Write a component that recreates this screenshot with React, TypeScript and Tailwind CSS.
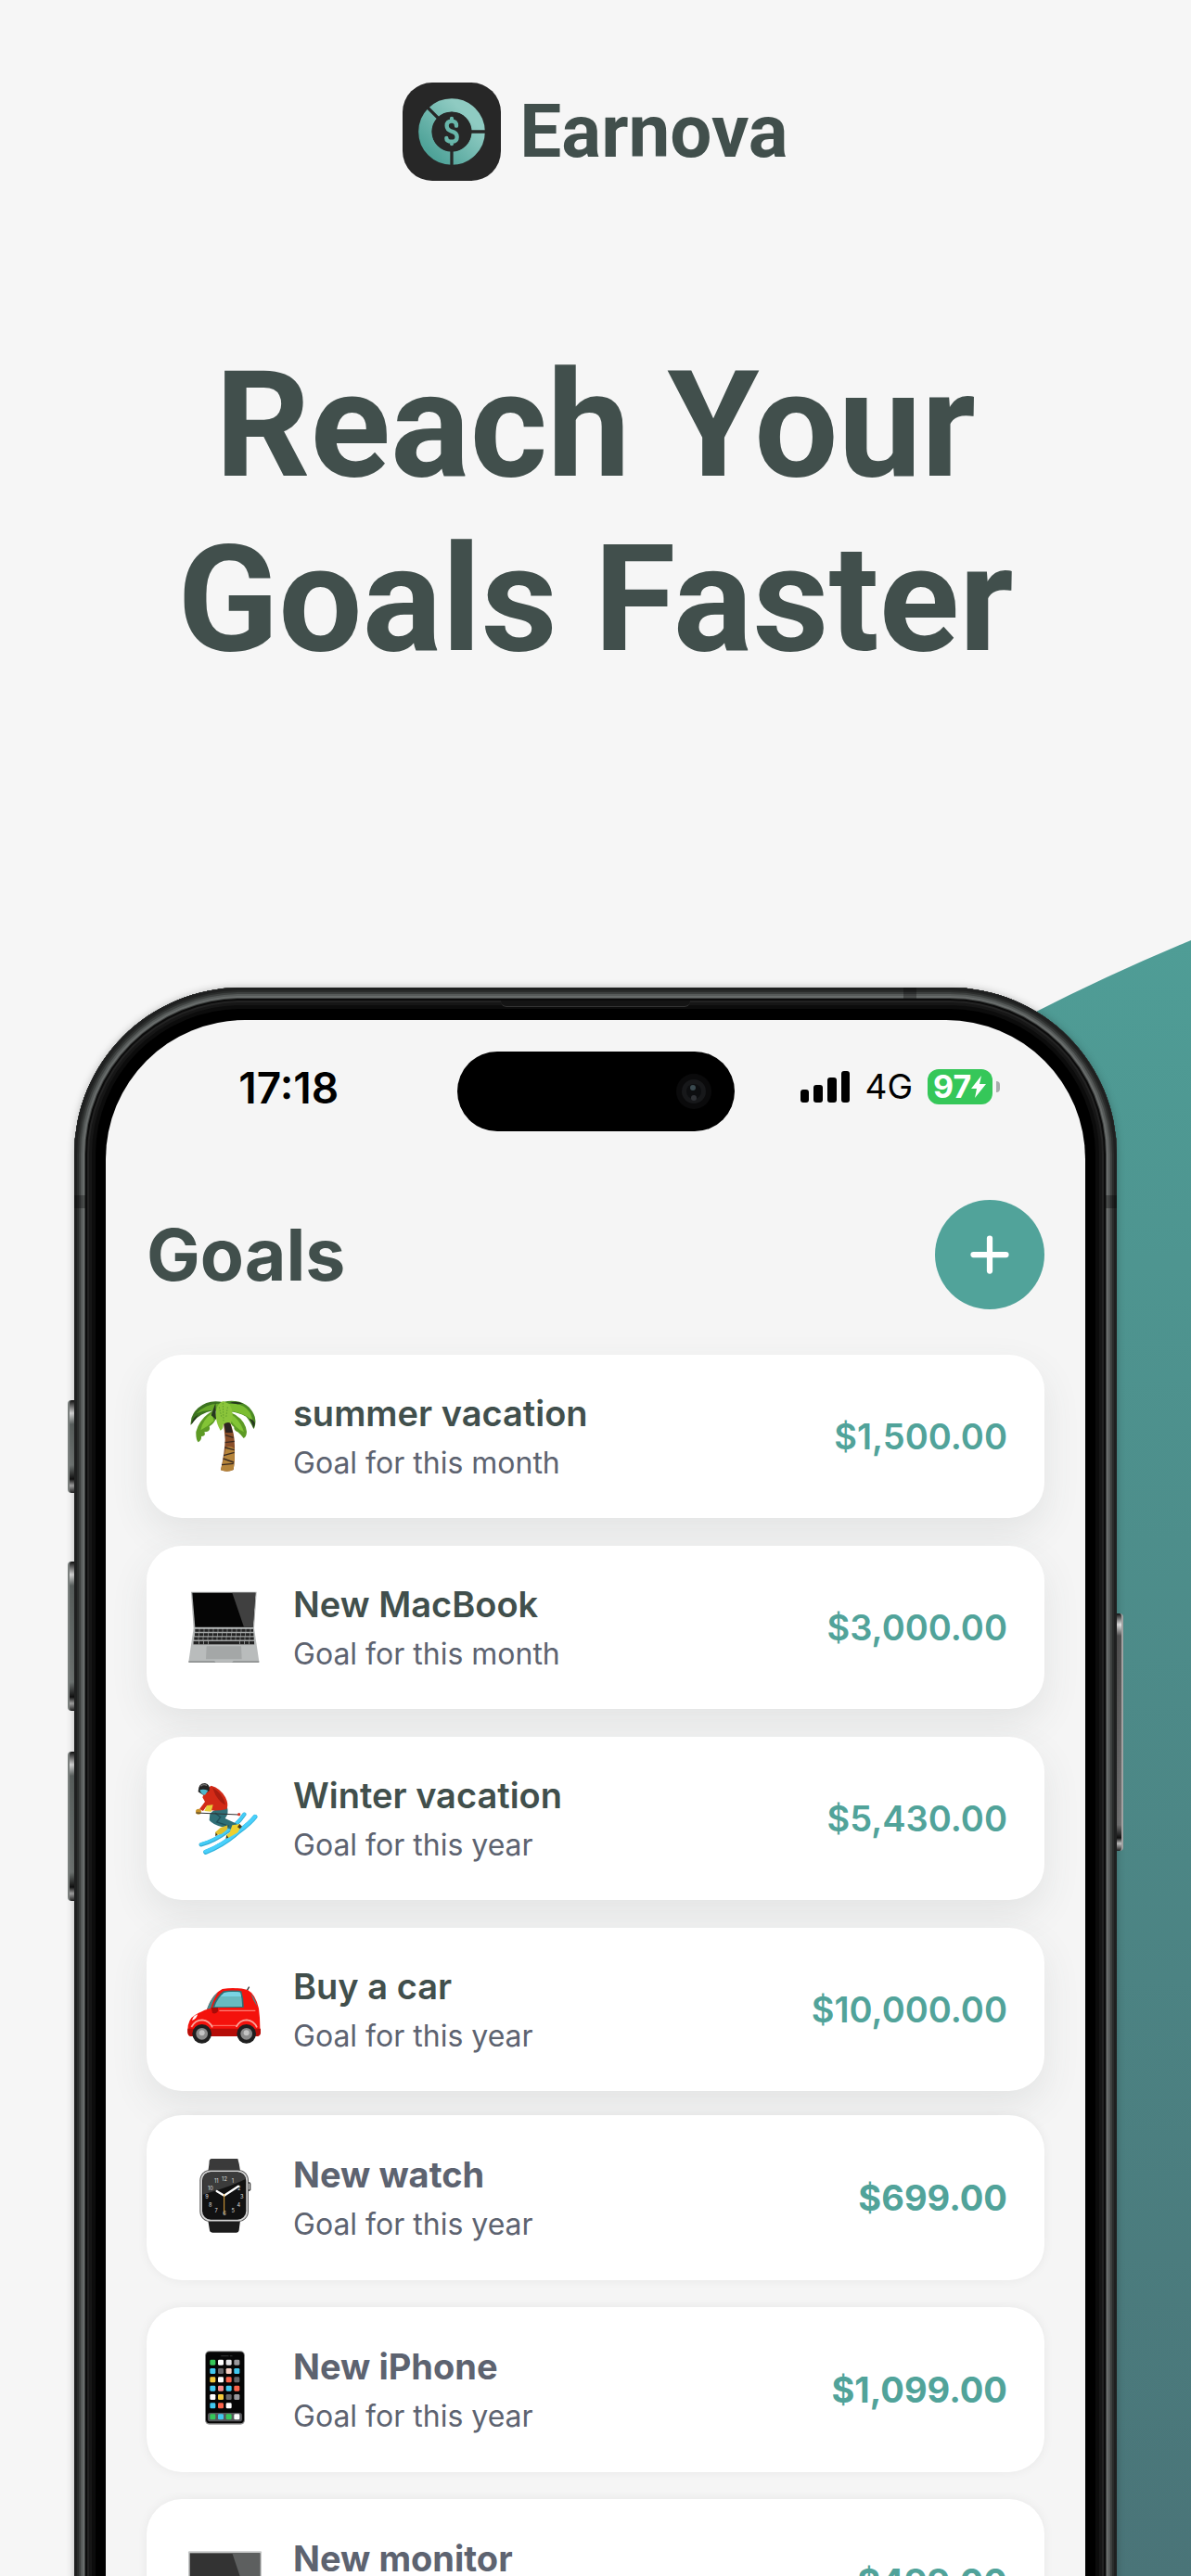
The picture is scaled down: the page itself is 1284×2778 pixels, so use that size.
import { Plus } from 'lucide-react';

const PalmIcon = () => (
    <svg viewBox="155 180 240 240" className="size-20 shrink-0" aria-hidden="true">
        <path d="M272 255 Q280 242 292 252 Q308 290 308 330 Q309 380 304 408 Q284 418 263 409 Q276 350 277 310 Z" fill="#8a4f2a" />
        <path d="M280 335 Q296 330 307 340 Q309 380 304 408 Q284 418 263 409 Q273 370 280 335Z" fill="#b5843a" />
        <path d="M273 258 Q284 246 294 258 L302 288 L279 288 Z" fill="#2d2420" />
        <path d="M278 296 L304 304 M277 320 L307 316 M276 336 L307 344 M272 362 L307 352 M271 372 L305 384 M266 392 L304 388" stroke="#3a2a20" strokeWidth="4" fill="none" />
        <path d="M240 215 Q195 240 183 285 Q182 310 190 319 Q202 312 200 300 Q216 300 210 286 Q232 284 226 268 Q244 258 250 235 Z" fill="#5d9a25" />
        <path d="M235 225 Q205 245 198 280 Q222 268 240 250 Z" fill="#83c436" />
        <path d="M300 225 Q342 245 347 285 Q346 302 337 306 Q328 294 318 286 Q304 280 306 270 Q294 262 292 245 Z" fill="#5d9a25" />
        <path d="M295 228 Q325 245 338 286 Q310 275 290 240 Z" fill="#83c436" />
        <path d="M272 190 Q225 178 190 208 Q163 232 166 264 Q188 226 240 216 Z" fill="#3d7420" />
        <path d="M265 195 Q220 190 184 226 Q215 212 250 218 Z" fill="#68a92b" />
        <path d="M272 188 Q325 178 355 206 Q378 232 375 256 Q374 272 369 276 Q358 250 345 236 Q320 222 290 220 Z" fill="#4b8a24" />
        <path d="M290 195 Q335 190 357 222 Q365 238 366 252 Q340 222 290 218 Z" fill="#7bbd32" />
        <path d="M168 262 Q170 240 190 230 L180 246 Z M369 274 Q362 250 355 242 Q370 246 374 258 Z M246 192 L248 246 L232 232 Z M292 192 Q310 184 335 194 L318 196 Z" fill="#26381f" />
        <path d="M270 186 Q245 196 247 235 Q250 262 262 281 Q272 276 271 262 Q285 250 296 258 Q308 225 292 196 Z" fill="#8bc53b" />
        <path d="M270 192 L272 250 M258 205 L266 240 M285 205 L280 240" stroke="#4f8c25" strokeWidth="2" strokeDasharray="5 4" />
    </svg>
);

const LaptopIcon = () => (
    <svg viewBox="155 795 240 240" className="size-20 shrink-0" aria-hidden="true">
        <path d="M167 800 H379 L371 917 H175 Z" fill="#a9abab" />
        <path d="M171 803 H375 L367 914 H180 Z" fill="#050505" />
        <path d="M300 803 H375 L367 914 H338 Z" fill="#404040" />
        <path d="M175 917 H371 L387 1026 H159 Z" fill="#b9bcbc" />
        <path d="M179 921 H368 L373 971 H173 Z" fill="#a2a5a5" />
        <path d="M180 925 H368 M179 938 H369 M177 951 H370" stroke="#222" strokeWidth="9" strokeDasharray="13 2" />
        <path d="M175 965 H371" stroke="#222" strokeWidth="10" />
        <path d="M191 965 h2 M206 965 h2 M222 965 h2 M323 965 h2 M338 965 h2 M354 965 h2" stroke="#b9bcbc" strokeWidth="10" />
        <path d="M217 976 H329 L331 1018 H215 Z" fill="#a4a7a7" />
        <path d="M159 1024 H242 L246 1027 H300 L304 1024 H387 V1029 H159 Z" fill="#8d9090" />
    </svg>
);

const SkierIcon = () => (
    <svg viewBox="155 180 240 240" className="size-20 shrink-0" aria-hidden="true">
        <path d="M199 385 Q238 376 285 342 Q322 314 339 287" stroke="#37a9cf" strokeWidth="13" fill="none" strokeLinecap="round" />
        <path d="M199 383 Q238 374 285 340 Q322 312 339 286" stroke="#43cdf7" strokeWidth="9" fill="none" strokeLinecap="round" />
        <path d="M228 285 Q238 268 284 264 Q290 285 277 300 L316 318 Q312 332 300 336 L268 328 Q240 322 226 306 Z" fill="#2f6f76" />
        <path d="M244 282 L262 296 L250 312 L290 325" stroke="#1f4f58" strokeWidth="4" fill="none" />
        <path d="M262 330 L285 322 L284 336 L266 350 L248 354 L245 345 Z" fill="#e0c02c" />
        <path d="M214 409 Q270 388 322 342 Q358 316 374 295" stroke="#2fb2dc" strokeWidth="15" fill="none" strokeLinecap="round" />
        <path d="M214 407 Q270 386 322 340 Q358 314 374 294" stroke="#49d0fb" strokeWidth="11" fill="none" strokeLinecap="round" />
        <path d="M300 322 L324 318 L327 330 L318 346 L286 364 L280 355 L292 346 Z" fill="#edd02f" />
        <path d="M324 318 l8 8 l-7 8 l-8 -6 Z M282 354 l6 8 l-9 3 Z M247 346 l6 8 l-8 3 Z" fill="#4a3b1c" />
        <path d="M204 232 Q212 205 232 194 Q262 202 278 232 Q290 256 282 270 Q256 276 232 274 L216 262 L206 276 L194 270 L212 246 Z" fill="#d22a17" />
        <path d="M236 200 Q270 218 278 256 Q262 250 246 224 Z" fill="#a81d10" />
        <path d="M218 258 L238 256 L232 278 L210 276 Z" fill="#e8cf3a" />
        <circle cx="191" cy="278" r="9" fill="#c8932a" />
        <path d="M183 282 L322 288" stroke="#333" strokeWidth="3" />
        <circle cx="322" cy="287" r="5" fill="#d8362a" />
        <path d="M190 214 Q190 186 212 186 Q230 190 226 210 Q214 220 206 224 Z" fill="#222" />
        <path d="M195 208 Q208 204 222 210 L212 224 Q200 224 195 208Z" fill="#4fb7cc" />
        <path d="M198 196 Q206 188 218 193" stroke="#777" strokeWidth="4" fill="none" />
    </svg>
);

const CarIcon = () => (
    <svg viewBox="155 798 240 240" className="size-20 shrink-0" aria-hidden="true">
        <path d="M346 860 L355 845" stroke="#333" strokeWidth="4" />
        <path d="M156 988 Q155 950 180 936 Q205 922 218 918 Q235 868 268 852 Q310 845 350 855 Q375 868 386 915 Q391 950 390 995 Q388 1004 378 1005 H165 Q155 1002 156 988 Z" fill="#f4120c" />
        <path d="M156 980 H392 V995 Q390 1005 378 1005 H165 Q154 1002 156 980 Z" fill="#b50d08" />
        <path d="M236 912 Q248 875 272 859 Q300 854 330 859 Q338 885 337 912 Z" fill="#2d6f74" />
        <path d="M243 910 Q252 880 274 864 Q300 858 326 863 Q333 885 332 909 Z" fill="#68bac0" />
        <path d="M274 864 Q300 858 326 863 L329 876 H262 Z" fill="#7ad4e4" />
        <path d="M218 917 Q232 880 254 862 Q238 888 230 915 Z M360 866 Q374 882 381 908 Q368 890 360 866Z" fill="#478b8f" />
        <path d="M232 912 h22 v12 q-6 10 -18 6 Z" fill="#a80b07" />
        <path d="M170 954 Q174 938 188 934 Q186 948 170 954 Z" fill="#fff" />
        <path d="M258 922 H375" stroke="#ff8076" strokeWidth="4" />
        <path d="M234 970 H315" stroke="#ff7d73" strokeWidth="3" />
        <path d="M168 975 Q180 952 203 952 Q226 954 236 976 M313 975 Q324 952 347 952 Q370 954 380 976" stroke="#f9a69c" strokeWidth="5" fill="none" />
        <circle cx="202" cy="997" r="31" fill="#1f1f1f" />
        <circle cx="346" cy="997" r="31" fill="#1f1f1f" />
        <circle cx="202" cy="997" r="19" fill="#8c8c8c" />
        <circle cx="346" cy="997" r="19" fill="#8c8c8c" />
        <circle cx="202" cy="994" r="9" fill="#c4c4c4" />
        <circle cx="346" cy="994" r="9" fill="#c4c4c4" />
    </svg>
);

const WatchIcon = () => (
    <svg viewBox="155 180 240 240" className="size-20 shrink-0 overflow-visible" aria-hidden="true">
        <path d="M232 174 H318 Q323 190 326 214 H222 Q226 190 226 180 Q227 175 232 174 Z" fill="#3a3a3a" />
        <path d="M222 374 H326 Q323 395 322 406 Q321 413 314 413 H236 Q227 412 227 405 Z" fill="#1c1c1c" />
        <path d="M351 249 q8 -1 9 5 v20 q-1 6 -9 6 Z" fill="#444" />
        <path d="M351 254 h5 v20 h-5 Z" fill="#ddd" />
        <rect x="195" y="210" width="158" height="168" rx="34" fill="#555" />
        <rect x="198" y="212" width="152" height="164" rx="32" fill="#d5d5d5" />
        <rect x="203" y="217" width="142" height="154" rx="28" fill="#111" />
        <path d="M205 240 Q208 218 230 218 H318 Q342 220 343 240 Q300 262 205 290 Z" fill="#3b3b3b" />
        <g fill="#ddd" fontSize="17" fontFamily="Inter, sans-serif" textAnchor="middle">
            <text x="275" y="247">12</text>
            <text x="302" y="253">1</text>
            <text x="322" y="275">2</text>
            <text x="331" y="303">3</text>
            <text x="321" y="330">4</text>
            <text x="303" y="348">5</text>
            <text x="275" y="357">6</text>
            <text x="248" y="348">7</text>
            <text x="229" y="330">8</text>
            <text x="218" y="303">9</text>
            <text x="230" y="275">10</text>
            <text x="249" y="253">11</text>
        </g>
        <path d="M274 293 L320 263 M274 293 L250 279" stroke="#fff" strokeWidth="7" strokeLinecap="round" />
        <path d="M274 288 V354" stroke="#e0a33a" strokeWidth="3" />
    </svg>
);

const apps = [
    ['#35c759', '#ffffff', '#e3e3e6', '#98989c'],
    ['#41c8ef', '#67676b', '#f3cfc4', '#41c8ef'],
    ['#f2c93a', '#ffffff', '#fb634a', '#67676b'],
    ['#41c8ef', '#f68a8a', '#41c8ef', '#fb634a'],
    ['#ffffff', '#f2c93a', '#67676b', '#98989c'],
    ['#41c8ef', '#fb634a', '#ffffff'],
];

const PhoneIcon = () => (
    <svg viewBox="155 801 240 240" className="size-20 shrink-0 overflow-visible" aria-hidden="true">
        <rect x="212" y="796" width="129" height="238" rx="14" fill="#8b8b8b" />
        <rect x="215" y="799" width="123" height="231" rx="12" fill="#060606" />
        <path d="M265 812 h22 M294 812 h5" stroke="#2c2c2c" strokeWidth="4" strokeLinecap="round" />
        {apps.map((row, y) =>
            row.map((color, x) => (
                <rect key={`${x}-${y}`} x={228 + x * 26} y={824 + y * 28} width="18" height="18" rx="4" fill={color} />
            ))
        )}
        <rect x="221" y="996" width="111" height="28" rx="8" fill="#55565a" />
        {['#35c759', '#41c8ef', '#35c759', '#ffffff'].map((color, x) => (
            <rect key={x} x={228 + x * 26} y="1000" width="18" height="18" rx="4" fill={color} />
        ))}
    </svg>
);

const MonitorIcon = () => (
    <svg viewBox="155 1422 240 240" className="size-20 shrink-0 overflow-visible" aria-hidden="true">
        <rect x="158" y="1444" width="237" height="150" rx="3" fill="#c6c8c8" />
        <rect x="163" y="1450" width="227" height="134" fill="#333" />
        <path d="M300 1450 H390 V1584 H345 Z" fill="#5d5f5f" />
        <path d="M245 1594 H308 L316 1640 H237 Z" fill="#a9abab" />
    </svg>
);

const goals = [
    { title: 'summer vacation', period: 'Goal for this month', amount: '$1,500.00', Icon: PalmIcon },
    { title: 'New MacBook', period: 'Goal for this month', amount: '$3,000.00', Icon: LaptopIcon },
    { title: 'Winter vacation', period: 'Goal for this year', amount: '$5,430.00', Icon: SkierIcon },
    { title: 'Buy a car', period: 'Goal for this year', amount: '$10,000.00', Icon: CarIcon },
];

const nextGoals = [
    { title: 'New watch', period: 'Goal for this year', amount: '$699.00', Icon: WatchIcon },
    { title: 'New iPhone', period: 'Goal for this year', amount: '$1,099.00', Icon: PhoneIcon },
    { title: 'New monitor', period: 'Goal for this year', amount: '$499.00', Icon: MonitorIcon },
];

const Logo = () => (
    <svg viewBox="0 0 318 318" className="size-[106px] shrink-0" aria-hidden="true">
        <defs>
            <linearGradient id="ring" x1="0" y1="1" x2="1" y2="0">
                <stop offset="0.1" stopColor="#4fa399" />
                <stop offset="0.8" stopColor="#8fcbc2" />
            </linearGradient>
        </defs>
        <rect width="318" height="318" rx="96" fill="#272727" />
        <circle cx="159" cy="159" r="86" fill="none" stroke="url(#ring)" strokeWidth="43" />
        <path d="M159 159 V275 M159 159 H275 M159 159 L77 77" stroke="#272727" strokeWidth="10" />
        <circle cx="159" cy="159" r="64" fill="#272727" />
        <path d="M174 140 Q174 125 159 125 Q143 125 143 140 Q143 152 159 158 Q176 163 176 176 Q176 191 159 191 Q142 191 142 180 M159 117 V125 M159 191 V198" fill="none" stroke="#68b6aa" strokeWidth="13" strokeLinecap="round" />
    </svg>
);

function StatusBar() {
    return (
        <div className="grid grid-cols-[1fr_299px_1fr] items-center">
            <p className="pb-2 pl-4 text-center text-[46px] leading-[48px] font-semibold text-black">17:18</p>
            <div className="flex h-[86px] items-center justify-end rounded-full bg-black pr-6">
                <svg viewBox="0 0 40 40" className="size-10" aria-hidden="true">
                    <circle cx="20" cy="20" r="19" fill="#0a0a0b" />
                    <circle cx="20" cy="20" r="13" fill="#17181a" />
                    <circle cx="20" cy="20" r="8" fill="#0d0e10" />
                    <circle cx="19" cy="16" r="3" fill="#3a4a50" />
                    <circle cx="20" cy="27" r="3" fill="#303236" />
                </svg>
            </div>
            <div className="flex items-center justify-center pr-5 pb-[10px]">
                <svg viewBox="0 0 53 34" className="h-[34px] w-[53px]" aria-hidden="true">
                    <rect x="0" y="20" width="9" height="14" rx="3" />
                    <rect x="14" y="15" width="10" height="19" rx="3" />
                    <rect x="29" y="7" width="10" height="27" rx="3" />
                    <rect x="44" y="0" width="9" height="34" rx="3" />
                </svg>
                <span className="pl-4 text-[37px] leading-[48px] text-black">4G</span>
                <div className="ml-4 flex h-[38px] w-[70px] items-center rounded-xl bg-[#35c759] pl-[6px]">
                    <span className="text-[34px] leading-[38px] font-bold text-white">97</span>
                    <svg viewBox="0 0 16 24" className="h-6 w-4" aria-hidden="true">
                        <path d="M11 0 L0 14 H6 L4 24 L16 9 H9 Z" fill="#fff" />
                    </svg>
                </div>
                <div className="ml-1 h-3 w-1 rounded-r-full bg-[#a9adad]" />
            </div>
        </div>
    );
}

export default function App() {
    return (
        <main className="relative flex h-screen flex-col overflow-hidden bg-[#f6f6f6] px-20 pt-[89px] font-['Inter',sans-serif] text-[#414f4c]">
            <svg viewBox="0 0 300 1764" className="absolute top-[1014px] right-0 h-[1764px] w-[300px]" aria-hidden="true">
                <defs>
                    <linearGradient id="hill" x1="0" y1="0" x2="0" y2="1">
                        <stop offset="0" stopColor="#4f9d96" />
                        <stop offset="1" stopColor="#4a7478" />
                    </linearGradient>
                </defs>
                <path d="M300 0 Q213 36 131 78 Q60 120 0 170 V1764 H300 Z" fill="url(#hill)" />
            </svg>

            <div className="flex items-center justify-center gap-5 font-['Roboto',sans-serif]">
                <Logo />
                <p className="text-[80px] leading-[106px] font-bold">Earnova</p>
            </div>
            <h1 className="mt-[170px] text-center font-['Roboto',sans-serif] text-[160px] leading-[188px] font-bold">
                Reach Your<br />Goals Faster
            </h1>

            <div className="relative mt-[324px] min-h-0 flex-1">
                {/* side buttons */}
                <div className="absolute top-[445px] -left-[7px] h-[100px] w-2 rounded-l-sm border-l-2 border-[#7d8381] bg-[linear-gradient(#111,#dedede_14px,#5d6462_26px,#737977_70px,#111_85px,#aaa_92px,#222)]" />
                <div className="absolute top-[619px] -left-[7px] h-[161px] w-2 rounded-l-sm border-l-2 border-[#7d8381] bg-[linear-gradient(#111,#dedede_14px,#5d6462_26px,#737977_130px,#111_146px,#aaa_153px,#222)]" />
                <div className="absolute top-[824px] -left-[7px] h-[161px] w-2 rounded-l-sm border-l-2 border-[#7d8381] bg-[linear-gradient(#111,#dedede_14px,#5d6462_26px,#737977_130px,#111_146px,#aaa_153px,#222)]" />
                <div className="absolute top-[675px] -right-[7px] h-[256px] w-2 rounded-r-sm border-r-2 border-[#a5a5a5] bg-[linear-gradient(#111,#eee_12px,#555_24px,#777_228px,#111_242px,#ccc_248px,#222)]" />

                {/* the frame runs on below the fold */}
                <div className="relative h-[calc(100%+48px)] rounded-t-[180px] bg-black px-[34px] pt-[35px] shadow-[0_0_8px_rgba(0,0,0,0.25),inset_0_0_0_3px_#1f2020,inset_0_0_0_5px_#2a2c2b,inset_0_0_0_7px_#3d403f,inset_0_0_0_9px_#565a59,inset_0_0_0_11px_#686c6b,inset_0_0_0_12px_#404342,inset_0_0_0_14px_#0b0b0b,inset_0_0_0_16px_#222222,inset_0_0_0_19px_#161616,inset_0_0_0_23px_#0c0c0c]">
                    {/* antenna lines and speaker */}
                    <div className="absolute top-[224px] left-0 h-[14px] w-3 bg-black/30" />
                    <div className="absolute top-[224px] right-0 h-[14px] w-3 bg-black/30" />
                    <div className="absolute top-0 right-[216px] h-3 w-[14px] bg-black/30" />
                    <div className="absolute top-[14px] left-1/2 h-[7px] w-[204px] -translate-x-1/2 rounded-b-md border-b border-[#333] bg-[#141414]" />

                    <div className="h-full overflow-hidden rounded-t-[150px] bg-[#f5f5f5] pt-[34px]">
                        <StatusBar />
                        <div className="mt-[74px] flex items-center justify-between px-11">
                            <h2 className="text-[77px] leading-[92px] font-bold">Goals</h2>
                            <button type="button" aria-label="Add goal" className="flex size-[118px] items-center justify-center rounded-full bg-[#51a39a] text-white">
                                <Plus className="size-[60px]" strokeWidth={2.5} />
                            </button>
                        </div>
                        <ul className="mt-[49px] flex flex-col gap-[30px] px-11">
                            {goals.map(({ title, period, amount, Icon }) => (
                                <li key={title} className="flex h-[176px] items-center gap-[34px] rounded-[38px] bg-white pr-10 pl-11 shadow-[0_16px_40px_rgba(65,80,77,0.1)]">
                                    <Icon />
                                    <div className="flex-1">
                                        <p className="text-[38px] leading-[58px] font-semibold">{title}</p>
                                        <p className="text-[32px] leading-[50px] text-[#5d6370]">{period}</p>
                                    </div>
                                    <p className="text-[38px] leading-[58px] font-semibold text-[#51a39a]">{amount}</p>
                                </li>
                            ))}
                        </ul>
                        <ul className="mt-[26px] flex flex-col gap-[29px] px-11">
                            {nextGoals.map(({ title, period, amount, Icon }) => (
                                <li key={title} className="flex h-[178px] items-center gap-[34px] rounded-[38px] bg-white pr-10 pl-11 shadow-[0_0_12px_rgba(0,0,0,0.06)]">
                                    <Icon />
                                    <div className="flex-1">
                                        <p className="text-[38px] leading-[58px] font-bold text-[#5d6370]">{title}</p>
                                        <p className="text-[32px] leading-[50px] text-[#5d6370]">{period}</p>
                                    </div>
                                    <p className="text-[38px] leading-[58px] font-bold text-[#51a39a]">{amount}</p>
                                </li>
                            ))}
                        </ul>
                    </div>
                </div>
            </div>
        </main>
    );
}
